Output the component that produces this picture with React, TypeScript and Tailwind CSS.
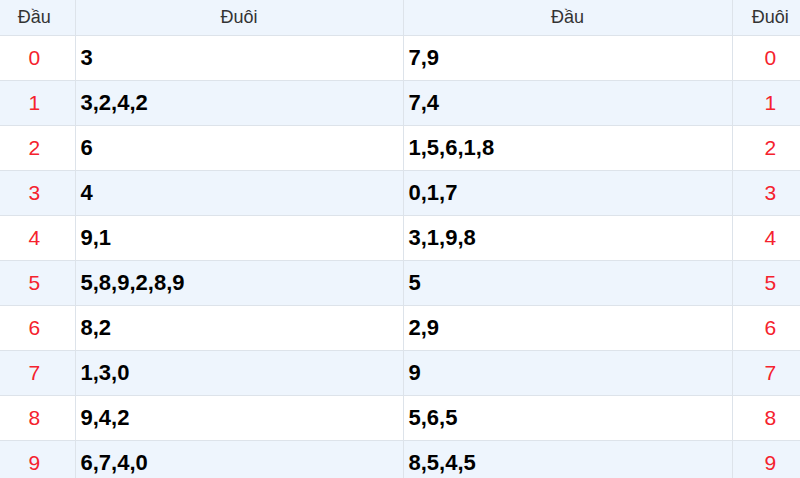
import React from 'react';

const rows: { head: number; tails: string; heads: string }[] = [
  { head: 0, tails: '3', heads: '7,9' },
  { head: 1, tails: '3,2,4,2', heads: '7,4' },
  { head: 2, tails: '6', heads: '1,5,6,1,8' },
  { head: 3, tails: '4', heads: '0,1,7' },
  { head: 4, tails: '9,1', heads: '3,1,9,8' },
  { head: 5, tails: '5,8,9,2,8,9', heads: '5' },
  { head: 6, tails: '8,2', heads: '2,9' },
  { head: 7, tails: '1,3,0', heads: '9' },
  { head: 8, tails: '9,4,2', heads: '5,6,5' },
  { head: 9, tails: '6,7,4,0', heads: '8,5,4,5' },
];

export default function App() {
  return (
    <div className="w-[800px] h-[478px] overflow-hidden bg-white font-['Liberation_Sans',Arial,sans-serif]">
      <table className="w-full border-collapse table-fixed">
        <colgroup>
          <col className="w-[75px]" />
          <col className="w-[328px]" />
          <col className="w-[329px]" />
          <col className="w-[68px]" />
        </colgroup>
        <thead>
          <tr className="h-[35px] bg-[#eef5fd] text-[18px] text-[#333]">
            <th className="font-normal pr-[6px] border-r border-b border-[#dde3ea]">Đầu</th>
            <th className="font-normal border-r border-b border-[#dde3ea]">Đuôi</th>
            <th className="font-normal border-r border-b border-[#dde3ea]">Đầu</th>
            <th className="font-normal pl-[8px] border-b border-[#dde3ea]">Đuôi</th>
          </tr>
        </thead>
        <tbody>
          {rows.map((r, i) => (
            <tr key={r.head} className={`h-[45px] ${i % 2 === 1 ? 'bg-[#eef5fd]' : 'bg-white'}`}>
              <td className="text-center pr-[6px] text-[21px] text-[#f5222d] border-r border-b border-[#dde3ea]">{r.head}</td>
              <td className="pl-[5px] text-[22px] font-bold text-black border-r border-b border-[#dde3ea]">{r.tails}</td>
              <td className="pl-[5px] text-[22px] font-bold text-black border-r border-b border-[#dde3ea]">{r.heads}</td>
              <td className="text-center pl-[8px] text-[21px] text-[#f5222d] border-b border-[#dde3ea]">{r.head}</td>
            </tr>
          ))}
        </tbody>
      </table>
    </div>
  );
}
